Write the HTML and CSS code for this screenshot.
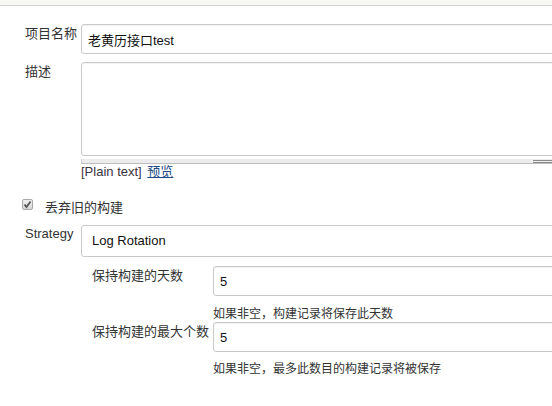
FILE: index.html
```html
<!DOCTYPE html>
<html lang="zh">
<head>
<meta charset="utf-8">
<title>配置</title>
<link rel="stylesheet" href="styles.css">
</head>
<body>
<div class="topbar"></div>
<div class="form">
  <div class="row row-name">
    <div class="label">项目名称</div>
    <div class="field"><input class="text" type="text" value="老黄历接口test"></div>
  </div>
  <div class="row row-desc">
    <div class="label">描述</div>
    <div class="field">
      <textarea class="area"></textarea>
      <div class="handle"><span class="grip"></span></div>
      <div class="markup">[Plain text] <a class="preview" href="#">预览</a></div>
    </div>
  </div>
  <div class="row row-check">
    <span class="checkbox"><svg width="9" height="9" viewBox="0 0 9 9"><path d="M1.5 4.5 L3.5 7 L7.5 1.5" fill="none" stroke="#555" stroke-width="1.8"/></svg></span>
    <span class="check-label">丢弃旧的构建</span>
  </div>
  <div class="row row-strategy">
    <div class="label label-latin">Strategy</div>
    <div class="field"><div class="select">Log Rotation</div></div>
  </div>
  <div class="nested">
    <div class="row row-sub first">
      <div class="label sublabel">保持构建的天数</div>
      <div class="subfield">
        <input class="text" type="text" value="5">
        <div class="help">如果非空，构建记录将保存此天数</div>
      </div>
    </div>
    <div class="row row-sub">
      <div class="label sublabel">保持构建的最大个数</div>
      <div class="subfield">
        <input class="text" type="text" value="5">
        <div class="help help-last">如果非空，最多此数目的构建记录将被保存</div>
      </div>
    </div>
  </div>
</div>
</body>
</html>
```
FILE: styles.css
```css
html, body {
  margin: 0;
  padding: 0;
  background: #fff;
  overflow: hidden;
}
body {
  width: 552px;
  height: 406px;
  font-family: "Liberation Sans", "Noto Sans CJK SC", sans-serif;
  font-size: 13px;
  line-height: 16px;
  color: #333;
}
.topbar {
  height: 5px;
  background: #f7f8f3;
  border-bottom: 1px solid #d3d3d3;
}
.form {
  padding-left: 25px;
}
.row {
  display: flex;
  align-items: flex-start;
}
.label {
  flex: none;
  width: 56px;
  padding-top: 2px;
  line-height: 16px;
  white-space: nowrap;
}
.label-latin {
  padding-top: 1px;
}
.field {
  flex: none;
  width: 520px;
}
.row-name {
  margin-top: 18px;
}
.text {
  display: block;
  box-sizing: border-box;
  width: 100%;
  height: 30px;
  margin: 0;
  padding: 0 6px;
  border: 1px solid #c9c9c9;
  border-radius: 3px;
  box-shadow: inset 0 1px 1px rgba(0, 0, 0, 0.06);
  font-family: "Liberation Sans", "Noto Sans CJK SC", sans-serif;
  font-size: 13px;
  color: #111;
  background: #fff;
  outline: none;
}
.row-desc {
  margin-top: 8px;
}
.area {
  display: block;
  box-sizing: border-box;
  width: 100%;
  height: 94px;
  margin: 0;
  border: 1px solid #c9c9c9;
  border-radius: 3px;
  box-shadow: inset 0 1px 1px rgba(0, 0, 0, 0.06);
  resize: none;
  outline: none;
}
.handle {
  display: flex;
  justify-content: flex-end;
  width: 471px;
  height: 4px;
  margin-top: 3px;
  background: #ececec;
  border-bottom: 1px solid #bdbdbd;
  border-left: 1px solid #cfcfcf;
  box-sizing: content-box;
}
.grip {
  width: 20px;
  height: 1px;
  margin-top: 1px;
  border-top: 1px solid #8a8a8a;
  border-bottom: 1px solid #8a8a8a;
}
.markup {
  line-height: 16px;
  color: #3a3340;
}
.preview {
  margin-left: 2px;
  color: #204a87;
  text-decoration: underline;
}
.row-check {
  margin-top: 20px;
  align-items: flex-start;
}
.checkbox {
  box-sizing: border-box;
  width: 11px;
  height: 11px;
  margin-left: -3px;
  margin-top: -1px;
  border: 1px solid #a8a8a8;
  border-radius: 2px;
  background: linear-gradient(#f0f0f0, #d6d6d6);
  display: flex;
  align-items: center;
  justify-content: center;
}
.checkbox svg {
  display: block;
}
.check-label {
  margin-left: 12px;
  line-height: 16px;
}
.row-strategy {
  margin-top: 9px;
}
.select {
  box-sizing: border-box;
  height: 32px;
  padding: 0 10px;
  border: 1px solid #c9c9c9;
  border-radius: 3px;
  display: flex;
  align-items: center;
  color: #111;
}
.nested {
  padding-left: 67px;
}
.sublabel {
  width: 121px;
}
.subfield {
  flex: none;
  width: 360px;
}
.row-sub.first {
  margin-top: 9px;
}
.help {
  margin-top: 10px;
  font-size: 12px;
  line-height: 16px;
  color: #333;
}
.help-last {
  margin-top: 9px;
}
```
